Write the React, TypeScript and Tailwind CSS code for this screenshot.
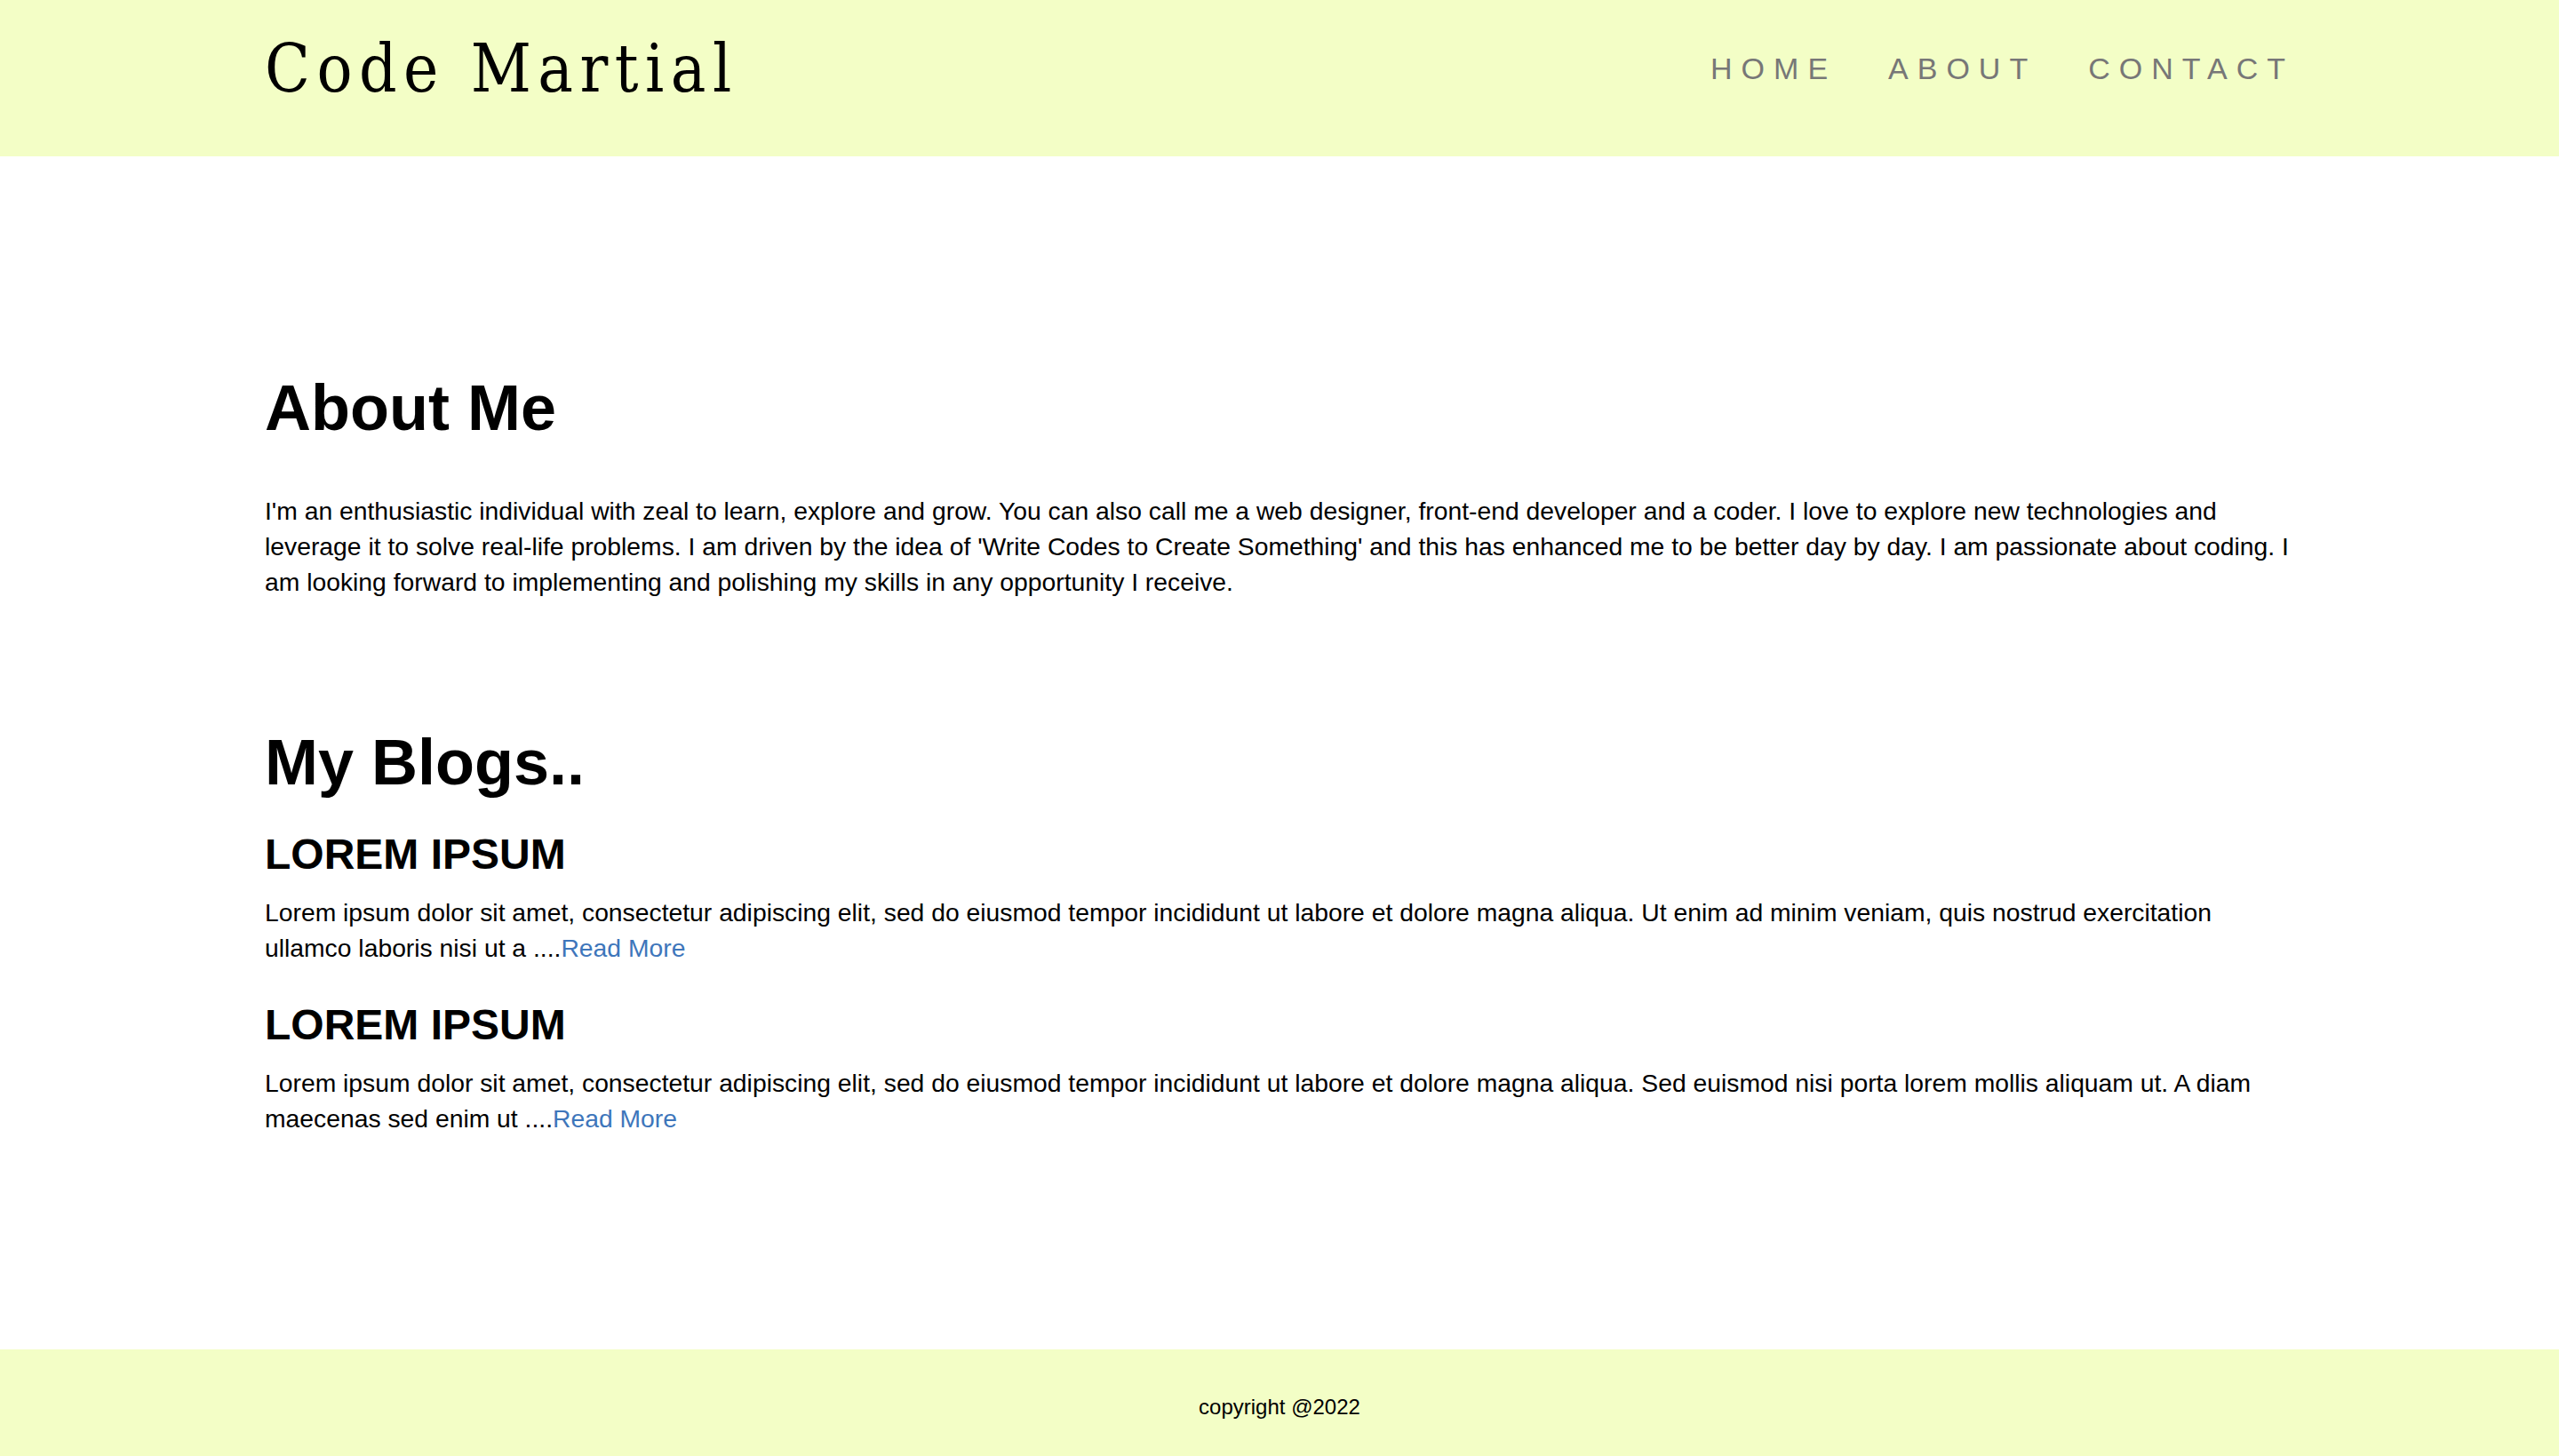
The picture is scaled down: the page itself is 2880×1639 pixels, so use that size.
export default function App() {
  const sans = { fontFamily: '"Liberation Sans", Arial, sans-serif' };

  return (
    <div className="flex min-h-screen flex-col bg-white text-black" style={sans}>
      <header className="h-[176px] bg-[#f3fec6] pb-[23px]">
        <div className="mx-auto flex h-full w-[2284px] items-center justify-between">
          <div className="font-['DejaVu_Serif_Condensed','DejaVu_Serif',serif] text-[74px] leading-none tracking-[7.5px] text-black">
            Code Martial
          </div>
          <nav className="flex items-center gap-[58px] text-[34px] leading-none tracking-[10px] text-[#777777]">
            <a href="#">HOME</a>
            <a href="#">ABOUT</a>
            <a href="#">CONTACT</a>
          </nav>
        </div>
      </header>

      <main className="flex-1">
        <div className="mx-auto w-[2284px] pt-[247px]">
          <section>
            <h1 className="text-[72px] font-bold leading-none">About Me</h1>
            <p className="mt-[60px] text-[28.3px] leading-[40px]">
              I'm an enthusiastic individual with zeal to learn, explore and grow. You can also call me a web
              designer, front-end developer and a coder. I love to explore new technologies and leverage it to
              solve real-life problems. I am driven by the idea of 'Write Codes to Create Something' and this has
              enhanced me to be better day by day. I am passionate about coding. I am looking forward to
              implementing and polishing my skills in any opportunity I receive.
            </p>
          </section>

          <section className="mt-[147px]">
            <h1 className="text-[72px] font-bold leading-none">My Blogs..</h1>

            <article className="mt-[44px]">
              <h3 className="text-[48px] font-bold leading-none">LOREM IPSUM</h3>
              <p className="mt-[21px] text-[28.3px] leading-[40px]">
                Lorem ipsum dolor sit amet, consectetur adipiscing elit, sed do eiusmod tempor incididunt ut labore
                et dolore magna aliqua. Ut enim ad minim veniam, quis nostrud exercitation ullamco laboris nisi ut a
                ....<a href="#" className="text-[#3e76bb]">Read More</a>
              </p>
            </article>

            <article className="mt-[43px]">
              <h3 className="text-[48px] font-bold leading-none">LOREM IPSUM</h3>
              <p className="mt-[21px] text-[28.3px] leading-[40px]">
                Lorem ipsum dolor sit amet, consectetur adipiscing elit, sed do eiusmod tempor incididunt ut labore
                et dolore magna aliqua. Sed euismod nisi porta lorem mollis aliquam ut. A diam maecenas sed enim ut
                ....<a href="#" className="text-[#3e76bb]">Read More</a>
              </p>
            </article>
          </section>
        </div>
      </main>

      <footer className="flex h-[120px] justify-center bg-[#f3fec6] pt-[53px]">
        <p className="text-[24px] leading-[24px]">copyright @2022</p>
      </footer>
    </div>
  );
}
